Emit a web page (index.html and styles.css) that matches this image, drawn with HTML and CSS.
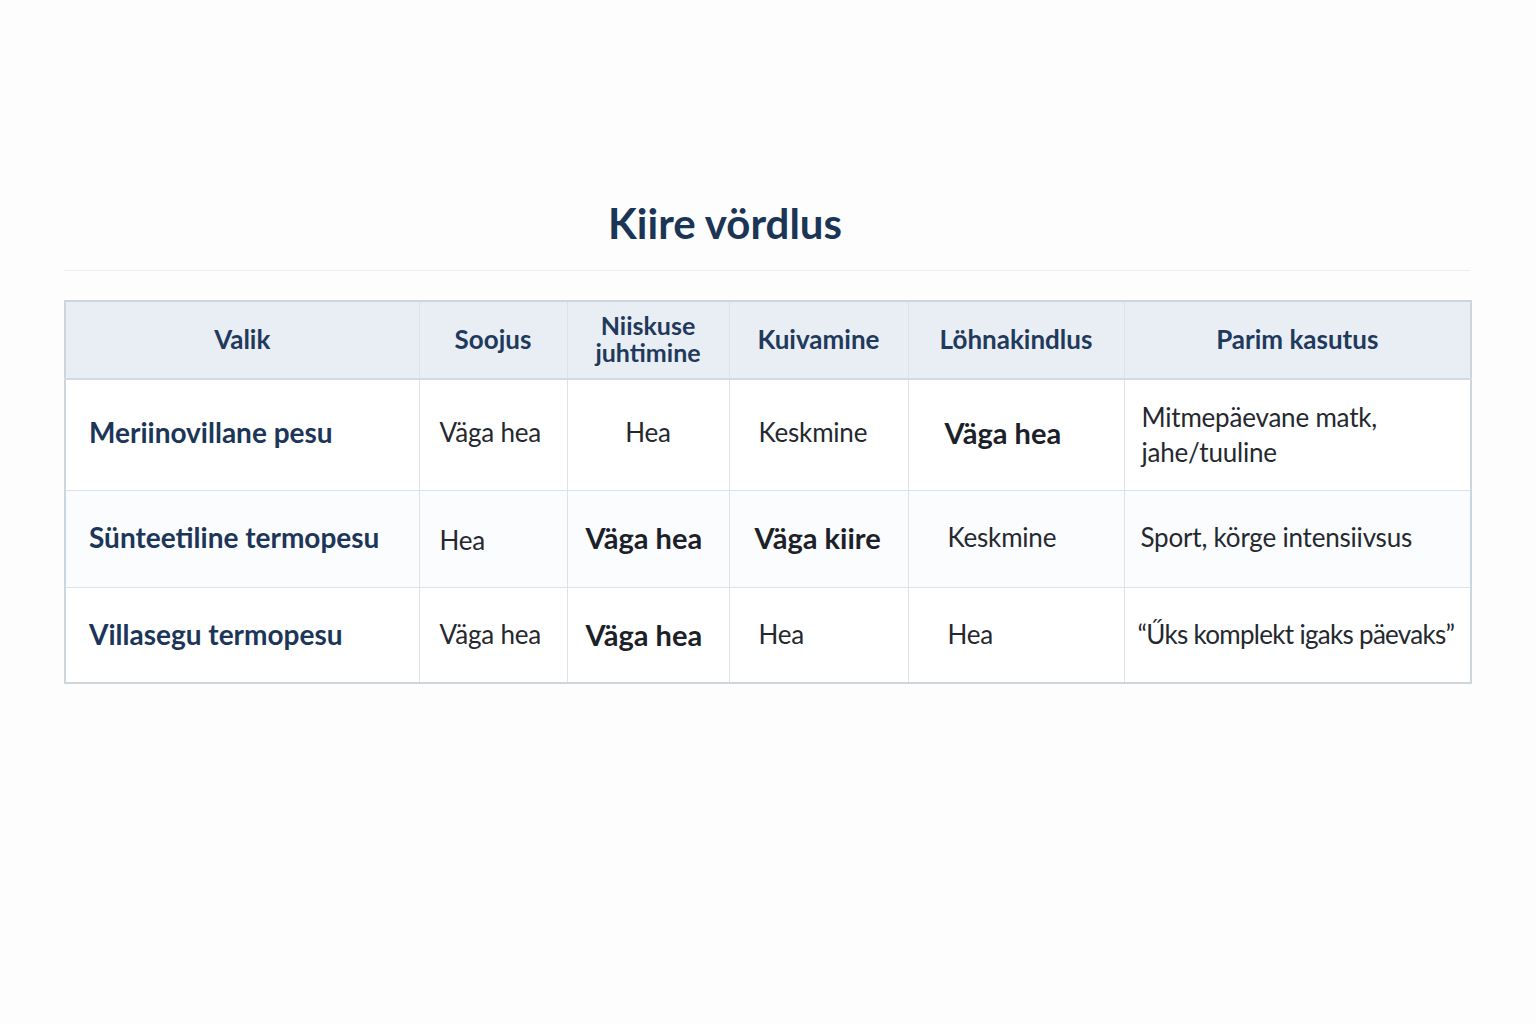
FILE: index.html
```html
<!DOCTYPE html>
<html lang="et">
<head>
<meta charset="utf-8">
<title>Kiire vördlus</title>
<link rel="stylesheet" href="styles.css">
</head>
<body>
<main class="page">
  <h1 class="title">Kiire vördlus</h1>
  <div class="rule"></div>
  <table class="cmp">
    <colgroup>
      <col class="c1"><col class="c2"><col class="c3"><col class="c4"><col class="c5"><col class="c6">
    </colgroup>
    <thead>
      <tr class="rh">
        <th>Valik</th>
        <th>Soojus</th>
        <th class="two">Niiskuse<br>juhtimine</th>
        <th>Kuivamine</th>
        <th>Löhnakindlus</th>
        <th>Parim kasutus</th>
      </tr>
    </thead>
    <tbody>
      <tr class="r1">
        <td class="label">Meriinovillane pesu</td>
        <td class="v2">Väga hea</td>
        <td class="v3 center">Hea</td>
        <td class="v4">Keskmine</td>
        <td class="v5 strong nudge">Väga hea</td>
        <td class="v6 use">Mitmepäevane matk,<br>jahe/tuuline</td>
      </tr>
      <tr class="r2">
        <td class="label">Sünteetiline termopesu</td>
        <td class="v2 low">Hea</td>
        <td class="v3 strong">Väga hea</td>
        <td class="v4 strong tight">Väga kiire</td>
        <td class="v5">Keskmine</td>
        <td class="v6">Sport, körge intensiivsus</td>
      </tr>
      <tr class="r3">
        <td class="label">Villasegu termopesu</td>
        <td class="v2">Väga hea</td>
        <td class="v3 strong">Väga hea</td>
        <td class="v4">Hea</td>
        <td class="v5">Hea</td>
        <td class="v6 quote">“Űks komplekt igaks päevaks”</td>
      </tr>
    </tbody>
  </table>
</main>
</body>
</html>
```
FILE: styles.css
```css
html, body {
  margin: 0;
  padding: 0;
  background: #fdfdfd;
}
body {
  font-family: Lato, "Open Sans", "Noto Sans", sans-serif;
  color: #23272e;
}
.page {
  width: 1406px;
  padding: 193px 0 0 64px;
}
.title {
  margin: 0;
  height: 60px;
  line-height: 60px;
  font-size: 42px;
  font-weight: 700;
  color: #1b3556;
  text-align: center;
  padding-right: 84px;
}
.rule {
  margin-top: 17px;
  height: 1px;
  background: #eceef1;
}
.cmp {
  margin-top: 29px;
  width: 1406px;
  border-collapse: collapse;
  table-layout: fixed;
  border: 2px solid #cdd5df;
}
.c1 { width: 354px; }
.c2 { width: 148px; }
.c3 { width: 162px; }
.c4 { width: 179px; }
.c5 { width: 216px; }
.c6 { width: 347px; }
.cmp th, .cmp td {
  border: 1px solid #dce2ea;
  padding: 0;
  vertical-align: middle;
}
.rh { height: 78px; }
.r1 { height: 111px; }
.r2 { height: 97px; }
.r3 { height: 96px; }
.cmp th {
  background: #e9eef5;
  color: #1f3a5c;
  font-size: 26px;
  line-height: 30px;
  font-weight: 700;
  text-align: center;
  border-bottom: 2px solid #d3dae4;
  padding-bottom: 2px;
}
.cmp th.two {
  font-size: 25px;
  line-height: 27px;
}
.cmp td {
  font-size: 26px;
  line-height: 35px;
  letter-spacing: -0.2px;
  color: #25292f;
  white-space: nowrap;
}
.r1 td { background: #ffffff; padding-bottom: 5px; }
.r2 td { background: #fbfcfd; padding-bottom: 3px; }
.r3 td { background: #ffffff; }
.cmp td.label {
  padding-left: 23px;
  font-weight: 700;
  font-size: 28px;
  letter-spacing: 0;
  color: #1c3659;
}
.v2 { padding-left: 20px !important; }
.v3 { padding-left: 18px !important; }
.v4 { padding-left: 29px !important; }
.v5 { padding-left: 39px !important; }
.v6 { padding-left: 16px !important; }
.cmp td.center { text-align: center; padding-left: 0 !important; }
.cmp td.strong {
  font-weight: 700;
  font-size: 29px;
  letter-spacing: 0;
  color: #1c2129;
}
.cmp td.nudge { padding-left: 36px !important; }
.cmp td.tight { padding-left: 25px !important; }
.cmp td.low { padding-top: 7px; }
.cmp td.use { padding-left: 17px !important; padding-bottom: 0; }
.cmp td.quote { padding-left: 13px !important; letter-spacing: -0.7px; }
```
